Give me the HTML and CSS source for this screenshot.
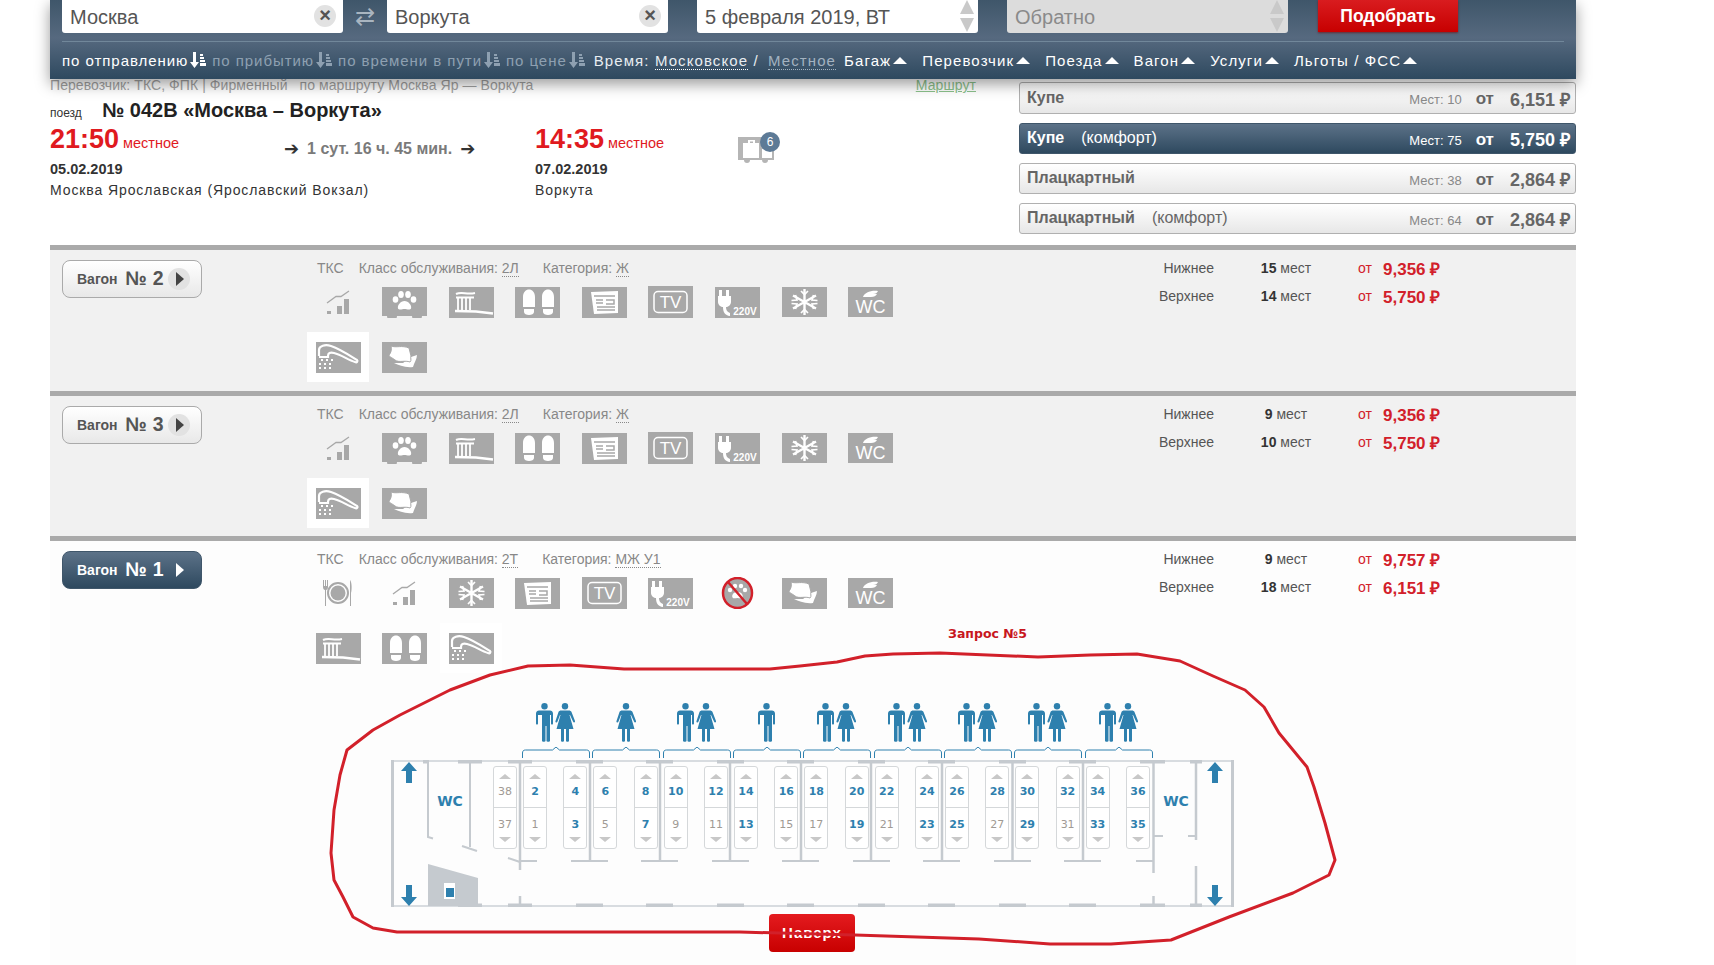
FILE: index.html
```html
<!DOCTYPE html>
<html lang="ru">
<head>
    <meta charset="UTF-8">
    <title>Москва – Воркута</title>
    <link rel="stylesheet" href="styles.css">
</head>
<body>

<!-- Icon set -->
<svg class="icon-defs" xmlns="http://www.w3.org/2000/svg">
    <symbol id="i-chart" viewBox="0 0 45 32">
        <path fill="#a8a8a8" d="M11 25h4v3h-4zM21 20h5v8h-5zM28 13h5v15h-5z"/>
        <path fill="none" stroke="#a8a8a8" stroke-width="1.300" d="M11 17l9-6.500h5l8-5.500"/>
    </symbol>
    <symbol id="i-paw" viewBox="0 0 45 32">
        <rect y="1" width="45" height="29" fill="#a8a8a8"/>
        <circle cx="10" cy="30" r="5" fill="#a8a8a8"/>
        <circle cx="35" cy="30" r="5" fill="#a8a8a8"/>
        <g fill="#fff">
            <path d="M22.500 15c4 0 7.500 4.500 6.500 7.500-1 2-4.500.5-6.500.5s-5.500 1.500-6.500-.5c-1-3 2.500-7.500 6.500-7.500z"/>
            <ellipse cx="13.500" cy="13.500" rx="2.800" ry="3.300"/>
            <ellipse cx="19" cy="8.500" rx="2.800" ry="3.500"/>
            <ellipse cx="26" cy="8.500" rx="2.800" ry="3.500"/>
            <ellipse cx="31.500" cy="13.500" rx="2.800" ry="3.300"/>
        </g>
    </symbol>
    <symbol id="i-brush" viewBox="0 0 45 32">
        <rect y="1" width="45" height="31" fill="#a8a8a8"/>
        <g fill="none" stroke="#fff">
            <path stroke-width="2" d="M7 8c6-3 10 1 19-1"/>
            <path stroke-width="1.800" d="M7 11.500h18M9 12v12M13 12v12M17 12v12M21 12v12"/>
            <path stroke-width="2.500" d="M6 25l21 .500 17 2"/>
        </g>
    </symbol>
    <symbol id="i-slippers" viewBox="0 0 45 32">
        <rect y="1" width="45" height="31" fill="#a8a8a8"/>
        <path fill="#fff" d="M8 11c0-10 12-10 12 0v10H8zM27 11c0-10 12-10 12 0v10H27zM9 23h10v3c0 4-10 4-10 0zM28 23h10v3c0 4-10 4-10 0z"/>
    </symbol>
    <symbol id="i-news" viewBox="0 0 45 32">
        <rect y="1" width="45" height="31" fill="#a8a8a8"/>
        <path fill="#fff" d="M9 6l27-1v22l-24 1z"/>
        <path fill="none" stroke="#a8a8a8" stroke-width="1.500" d="M12 10h21M14 14h7M14 17h7M24 14h8v4h-8M15 21h18M15 24h18"/>
    </symbol>
    <symbol id="i-tv" viewBox="0 0 45 32">
        <rect y="0" width="45" height="32" fill="#a8a8a8"/>
        <rect x="6" y="5.500" width="33" height="21" rx="4" fill="none" stroke="#fff" stroke-width="1.500"/>
        <text x="22.500" y="22" class="icon-text tv-text">TV</text>
    </symbol>
    <symbol id="i-plug" viewBox="0 0 45 32">
        <rect y="1" width="45" height="31" fill="#a8a8a8"/>
        <path fill="#fff" d="M4 4h3v6h4V4h3v6h2v6c0 3-3 5-5 5 0 3 1 5 4 6v3c-5-.5-7-4-7-9-2 0-5-2-5-5v-6h1z"/>
        <text x="30" y="29" class="icon-text plug-text">220V</text>
    </symbol>
    <symbol id="i-snow" viewBox="0 0 45 32">
        <rect y="1" width="45" height="30" fill="#a8a8a8"/>
        <g fill="none" stroke="#fff" stroke-width="2.400">
            <path d="M22.500 3v26M11 9.500l23 13M11 22.500l23-13"/>
            <path stroke-width="1.700" d="M19 5l3.500 3.500L26 5M19 27l3.500-3.500L26 27M9.500 14.500l5.500-.5-1.500-5M35.500 17.500l-5.500.5 1.500 5M9.500 17.500l5.500.5-1.500 5M35.500 14.500l-5.500-.5 1.500-5"/>
        </g>
    </symbol>
    <symbol id="i-wc" viewBox="0 0 45 32">
        <rect y="1" width="45" height="30" fill="#a8a8a8"/>
        <path fill="#fff" d="M15 11c1-4 8-7 15-6-1 2-2 3-5 3h4c-1 2-3 3-6 3z"/>
        <text x="22.500" y="27" class="icon-text wc-text">WC</text>
    </symbol>
    <symbol id="i-shower" viewBox="0 0 45 32">
        <rect y="1" width="45" height="31" fill="#a8a8a8"/>
        <path fill="none" stroke="#fff" stroke-width="2.200" d="M3 15V9c0-4 6-6 12-4 9 3 18 9 26 14 1 1 0 3-2 2-7-2-13-7-21-9-4-1-6 0-6 3v1H3"/>
        <path fill="none" stroke="#fff" stroke-width="2" stroke-dasharray="2 3" d="M5 19h14M3 23h15M3 27h13"/>
    </symbol>
    <symbol id="i-tissue" viewBox="0 0 45 32">
        <rect y="1" width="45" height="31" fill="#a8a8a8"/>
        <path fill="#fff" d="M12 22c5 2 11 5 19 4 1-4 4-8 4-12l-6 2-8 6z"/>
        <path fill="#fff" stroke="#a8a8a8" d="M9 5c5 2 11-1 18 2l2 8c-1 2 1 4-1 6-5-2-11 1-15-2-2-2-6-3-6-5 2-2 3-6 2-9z"/>
    </symbol>
    <symbol id="i-plate" viewBox="0 0 45 32">
        <g fill="#a8a8a8">
            <path d="M7 3h1v6h1V3h1v6h1V3h1v7c0 2-1 3-2 3v16H9V13c-1 0-2-1-2-3z"/>
            <path d="M34 3c2 2 2 10 1 13v13h-1z"/>
        </g>
        <circle cx="22" cy="16" r="10" fill="none" stroke="#a8a8a8" stroke-width="2"/>
        <circle cx="22" cy="16" r="7.500" fill="#a8a8a8"/>
    </symbol>
    <symbol id="i-nopet" viewBox="0 0 45 32">
        <ellipse cx="22.500" cy="16" rx="14.500" ry="15" fill="#a8a8a8" stroke="#d2202a" stroke-width="2.500"/>
        <g fill="#fff">
            <path d="M22.500 15c4 0 6 3 5 5.500-1 1.500-3 .5-5 .5s-4 1-5-.5c-1-2.500 1-5.500 5-5.500z"/>
            <circle cx="15" cy="13" r="2.200"/>
            <circle cx="20" cy="9" r="2.200"/>
            <circle cx="26" cy="9" r="2.200"/>
            <circle cx="30" cy="13" r="2.200"/>
        </g>
        <path stroke="#d2202a" stroke-width="2.500" d="M13 5l19 22"/>
    </symbol>
    <symbol id="i-man" viewBox="0 0 17 39">
        <circle cx="8.500" cy="3.200" r="3.200" fill="#2e80ae"/>
        <path fill="#2e80ae" d="M3 7.500h11c1.500 0 3 1 3 3v10c0 1.500-2 1.500-2 0V12h-1v26c0 1-3.500 1-3.500 0V23h-1v15c0 1-3.500 1-3.500 0V12H2v8.500c0 1.500-2 1.500-2 0v-10c0-2 1.500-3 3-3z"/>
    </symbol>
    <symbol id="i-woman" viewBox="0 0 20 39">
        <circle cx="10" cy="3.200" r="3.200" fill="#2e80ae"/>
        <path fill="#2e80ae" d="M6 7.500h8c1 0 2 .5 2.500 1.500l3.500 9c.5 1.500-1.500 2-2 .5L15 12l-.5 0 4 14H14v12c0 1-3 1-3 0V26H9v12c0 1-3 1-3 0V26H1.500l4-14-.5 0-2.500 6.500c-.5 1.500-2.500 1-2-.5L3.500 9C4 8 5 7.500 6 7.500z"/>
    </symbol>
    <symbol id="i-bracket" viewBox="0 0 68 11">
        <path fill="none" stroke="#2e80ae" d="M.5 11V6c0-2 1-3 3-3h27l3.500-3 3.500 3h27c2 0 3 1 3 3v5"/>
    </symbol>
    <symbol id="i-sort" viewBox="0 0 16 16">
        <path fill="currentColor" d="M3 0h3v10h3l-4.500 6L0 10h3zM10 2h3v2h-3zM10 5h4v2h-4zM10 8h5v2h-5zM10 11h6v3h-6z"/>
    </symbol>
</svg>

<div class="page">
    <!-- Search panel -->
    <header class="panel">
        <div class="search-row">
            <div class="field">Москва<span class="clear">×</span></div>
            <div class="swap">⇄</div>
            <div class="field">Воркута<span class="clear">×</span></div>
            <div class="field field-date">5 февраля 2019, ВТ<span class="spin"></span></div>
            <div class="field field-back">Обратно<span class="spin"></span></div>
            <button class="pick-btn">Подобрать</button>
        </div>
        <nav class="filter-row">
            <span class="sort sort-on">по отправлению<svg class="sort-icon"><use href="#i-sort"/></svg></span>
            <span class="sort">по прибытию<svg class="sort-icon"><use href="#i-sort"/></svg></span>
            <span class="sort">по времени в пути<svg class="sort-icon"><use href="#i-sort"/></svg></span>
            <span class="sort">по цене<svg class="sort-icon"><use href="#i-sort"/></svg></span>
            <span class="time-pick">Время: <u>Московское</u> / <u class="dim">Местное</u></span>
            <span class="drop">Багаж</span>
            <span class="drop">Перевозчик</span>
            <span class="drop">Поезда</span>
            <span class="drop">Вагон</span>
            <span class="drop">Услуги</span>
            <span class="drop">Льготы / ФСС</span>
        </nav>
    </header>

    <!-- Train summary -->
    <section class="trip">
        <div class="trip-info">
            <div class="carrier">
                <span>Перевозчик: ТКС, ФПК | Фирменный &nbsp; по маршруту Москва Яр — Воркута</span>
                <a class="route-link" href="#">Маршрут</a>
            </div>
            <div class="train-name"><small>поезд</small><strong>№ 042В «Москва – Воркута»</strong></div>
            <div class="times">
                <div class="stop">
                    <div class="clock">21:50<span>местное</span></div>
                    <div class="date">05.02.2019</div>
                    <div class="station">Москва Ярославская (Ярославский Вокзал)</div>
                </div>
                <div class="duration"><i>➔</i>1 сут. 16 ч. 45 мин.<i>➔</i></div>
                <div class="stop">
                    <div class="clock">14:35<span>местное</span></div>
                    <div class="date">07.02.2019</div>
                    <div class="station">Воркута</div>
                </div>
                <div class="baggage">
                    <svg width="36" height="28" viewBox="0 0 36 28">
                        <path fill="#b5b5b5" d="M0 0h36v23H30a3 3 0 0 1-6 0H12a3 3 0 0 1-6 0H0z"/>
                        <path fill="#fff" d="M5 6h5V3h7v3h4v15H5zM12 4.500v1.500h3V4.500zM24 12h10v9H24z"/>
                    </svg>
                    <span class="badge">6</span>
                </div>
            </div>
        </div>
        <div class="cabins">
            <div class="cabin"><b>Купе</b><span class="left">Мест: 10</span><b class="from">от</b><b class="price">6,151 ₽</b></div>
            <div class="cabin cabin-on"><b>Купе</b><em>(комфорт)</em><span class="left">Мест: 75</span><b class="from">от</b><b class="price">5,750 ₽</b></div>
            <div class="cabin"><b>Плацкартный</b><span class="left">Мест: 38</span><b class="from">от</b><b class="price">2,864 ₽</b></div>
            <div class="cabin"><b>Плацкартный</b><em>(комфорт)</em><span class="left">Мест: 64</span><b class="from">от</b><b class="price">2,864 ₽</b></div>
        </div>
    </section>

    <!-- Wagon 2 -->
    <section class="wagon wagon-first">
        <div class="wagon-top">
            <div class="wagon-side"><a class="wagon-btn">Вагон<b>№ 2</b><span class="go"></span></a></div>
            <div class="wagon-main">
                <div class="meta">ТКС<span>Класс обслуживания: <u>2Л</u></span><span>Категория: <u>Ж</u></span></div>
                <div class="services">
                    <div class="svc"><svg><use href="#i-chart"/></svg></div>
                    <div class="svc"><svg><use href="#i-paw"/></svg></div>
                    <div class="svc"><svg><use href="#i-brush"/></svg></div>
                    <div class="svc"><svg><use href="#i-slippers"/></svg></div>
                    <div class="svc"><svg><use href="#i-news"/></svg></div>
                    <div class="svc"><svg><use href="#i-tv"/></svg></div>
                    <div class="svc"><svg><use href="#i-plug"/></svg></div>
                    <div class="svc"><svg><use href="#i-snow"/></svg></div>
                    <div class="svc"><svg><use href="#i-wc"/></svg></div>
                    <div class="svc svc-on"><svg><use href="#i-shower"/></svg></div>
                    <div class="svc"><svg><use href="#i-tissue"/></svg></div>
                </div>
            </div>
            <div class="fares">
                <div class="fare"><span class="berth-name">Нижнее</span><span class="count"><b>15</b> мест</span><span class="fare-from">от</span><b class="fare-price">9,356 ₽</b></div>
                <div class="fare"><span class="berth-name">Верхнее</span><span class="count"><b>14</b> мест</span><span class="fare-from">от</span><b class="fare-price">5,750 ₽</b></div>
            </div>
        </div>
    </section>

    <!-- Wagon 3 -->
    <section class="wagon">
        <div class="wagon-top">
            <div class="wagon-side"><a class="wagon-btn">Вагон<b>№ 3</b><span class="go"></span></a></div>
            <div class="wagon-main">
                <div class="meta">ТКС<span>Класс обслуживания: <u>2Л</u></span><span>Категория: <u>Ж</u></span></div>
                <div class="services">
                    <div class="svc"><svg><use href="#i-chart"/></svg></div>
                    <div class="svc"><svg><use href="#i-paw"/></svg></div>
                    <div class="svc"><svg><use href="#i-brush"/></svg></div>
                    <div class="svc"><svg><use href="#i-slippers"/></svg></div>
                    <div class="svc"><svg><use href="#i-news"/></svg></div>
                    <div class="svc"><svg><use href="#i-tv"/></svg></div>
                    <div class="svc"><svg><use href="#i-plug"/></svg></div>
                    <div class="svc"><svg><use href="#i-snow"/></svg></div>
                    <div class="svc"><svg><use href="#i-wc"/></svg></div>
                    <div class="svc svc-on"><svg><use href="#i-shower"/></svg></div>
                    <div class="svc"><svg><use href="#i-tissue"/></svg></div>
                </div>
            </div>
            <div class="fares">
                <div class="fare"><span class="berth-name">Нижнее</span><span class="count"><b>9</b> мест</span><span class="fare-from">от</span><b class="fare-price">9,356 ₽</b></div>
                <div class="fare"><span class="berth-name">Верхнее</span><span class="count"><b>10</b> мест</span><span class="fare-from">от</span><b class="fare-price">5,750 ₽</b></div>
            </div>
        </div>
    </section>

    <!-- Wagon 1, opened -->
    <section class="wagon wagon-open">
        <div class="wagon-top">
            <div class="wagon-side"><a class="wagon-btn wagon-btn-on">Вагон<b>№ 1</b><span class="go"></span></a></div>
            <div class="wagon-main">
                <div class="meta">ТКС<span>Класс обслуживания: <u>2Т</u></span><span>Категория: <u>МЖ У1</u></span></div>
                <div class="services">
                    <div class="svc"><svg><use href="#i-plate"/></svg></div>
                    <div class="svc"><svg><use href="#i-chart"/></svg></div>
                    <div class="svc"><svg><use href="#i-snow"/></svg></div>
                    <div class="svc"><svg><use href="#i-news"/></svg></div>
                    <div class="svc"><svg><use href="#i-tv"/></svg></div>
                    <div class="svc"><svg><use href="#i-plug"/></svg></div>
                    <div class="svc"><svg><use href="#i-nopet"/></svg></div>
                    <div class="svc"><svg><use href="#i-tissue"/></svg></div>
                    <div class="svc"><svg><use href="#i-wc"/></svg></div>
                    <div class="svc"><svg><use href="#i-brush"/></svg></div>
                    <div class="svc"><svg><use href="#i-slippers"/></svg></div>
                    <div class="svc svc-on"><svg><use href="#i-shower"/></svg></div>
                </div>
            </div>
            <div class="fares">
                <div class="fare"><span class="berth-name">Нижнее</span><span class="count"><b>9</b> мест</span><span class="fare-from">от</span><b class="fare-price">9,757 ₽</b></div>
                <div class="fare"><span class="berth-name">Верхнее</span><span class="count"><b>18</b> мест</span><span class="fare-from">от</span><b class="fare-price">6,151 ₽</b></div>
            </div>
        </div>

        <!-- Compartment occupants -->
        <div class="people">
            <div class="group"><div class="figures"><svg class="man"><use href="#i-man"/></svg><svg class="woman"><use href="#i-woman"/></svg></div><svg class="bracket"><use href="#i-bracket"/></svg></div>
            <div class="group"><div class="figures"><svg class="woman"><use href="#i-woman"/></svg></div><svg class="bracket"><use href="#i-bracket"/></svg></div>
            <div class="group"><div class="figures"><svg class="man"><use href="#i-man"/></svg><svg class="woman"><use href="#i-woman"/></svg></div><svg class="bracket"><use href="#i-bracket"/></svg></div>
            <div class="group"><div class="figures"><svg class="man"><use href="#i-man"/></svg></div><svg class="bracket"><use href="#i-bracket"/></svg></div>
            <div class="group"><div class="figures"><svg class="man"><use href="#i-man"/></svg><svg class="woman"><use href="#i-woman"/></svg></div><svg class="bracket"><use href="#i-bracket"/></svg></div>
            <div class="group"><div class="figures"><svg class="man"><use href="#i-man"/></svg><svg class="woman"><use href="#i-woman"/></svg></div><svg class="bracket"><use href="#i-bracket"/></svg></div>
            <div class="group"><div class="figures"><svg class="man"><use href="#i-man"/></svg><svg class="woman"><use href="#i-woman"/></svg></div><svg class="bracket"><use href="#i-bracket"/></svg></div>
            <div class="group"><div class="figures"><svg class="man"><use href="#i-man"/></svg><svg class="woman"><use href="#i-woman"/></svg></div><svg class="bracket"><use href="#i-bracket"/></svg></div>
            <div class="group"><div class="figures"><svg class="man"><use href="#i-man"/></svg><svg class="woman"><use href="#i-woman"/></svg></div><svg class="bracket"><use href="#i-bracket"/></svg></div>
        </div>

        <!-- Wagon plan -->
        <div class="car">
            <svg class="car-walls" viewBox="391 760 843 147" xmlns="http://www.w3.org/2000/svg">
                <rect x="392.500" y="761" width="840" height="145" fill="none" stroke="#d8dce0" stroke-width="2"/>
                <path fill="none" stroke="#c5cacf" stroke-width="3" d="M392.500 760v147M1232.500 760v147"/>
                <path fill="none" stroke="#c5cacf" stroke-width="4" d="M458 761.500h24M508 761.500h24M576 761.500h27M646 761.500h27M717 761.500h27M787 761.500h27M858 761.500h27M928 761.500h27M999 761.500h27M1069 761.500h27M1140 761.500h25M1190 761.500h12M423 761.500h6M458 905.500h24M508 905.500h24M576 905.500h27M646 905.500h27M717 905.500h27M787 905.500h27M858 905.500h27M928 905.500h27M999 905.500h27M1069 905.500h27M1140 905.500h25M1190 905.500h12"/>
                <rect x="388" y="809" width="3" height="50" fill="#c5cacf"/>
                <rect x="1234" y="809" width="4" height="50" fill="#c5cacf"/>
                <path fill="none" stroke="#c5cacf" stroke-width="2" d="M428 763v74l5 1.500M470 763v84M462 846l15 5M508 858l12 4"/>
                <path fill="none" stroke="#c5cacf" stroke-width="2.500" d="M520 760v110M520 896v11M590 760v102M660 760v102M730 760v102M801 760v102M871 760v102M942 760v102M1012.500 760v102M1083 760v102M1153.500 760v113M1153.500 896v11M1196 763v77M1196 866v41"/>
                <path fill="none" stroke="#c5cacf" stroke-width="2" d="M520 861h17M571 861h37M641 861h37M712 861h37M782 861h37M853 861h37M923 861h37M994 861h37M1064 861h37M1136 861h18M1153 836h10M1188 836h8"/>
                <path fill="#c5cacf" d="M428 864l50 14v28h-50z"/>
                <rect x="444" y="883" width="11" height="16" fill="#fff"/>
                <rect x="446" y="888" width="8" height="9" fill="#2e80ae"/>
                <g fill="#2e80ae">
                    <path d="M409 762l8 9h-5v12h-6v-12h-5zM409 906l8-9h-5v-12h-6v12h-5zM1215 762l8 9h-5v12h-6v-12h-5zM1215 906l8-9h-5v-12h-6v12h-5z"/>
                </g>
                <text x="450" y="806" class="car-wc">WC</text>
                <text x="1176" y="806" class="car-wc">WC</text>
            </svg>
            <div class="seats">
                <div class="seat-half">
                    <div class="seat"><div class="berth upper busy">38</div><div class="berth lower busy">37</div></div>
                </div>
                <div class="compartment">
                    <div class="seat"><div class="berth upper">2</div><div class="berth lower busy">1</div></div>
                    <div class="seat"><div class="berth upper">4</div><div class="berth lower">3</div></div>
                </div>
                <div class="compartment">
                    <div class="seat"><div class="berth upper">6</div><div class="berth lower busy">5</div></div>
                    <div class="seat"><div class="berth upper">8</div><div class="berth lower">7</div></div>
                </div>
                <div class="compartment">
                    <div class="seat"><div class="berth upper">10</div><div class="berth lower busy">9</div></div>
                    <div class="seat"><div class="berth upper">12</div><div class="berth lower busy">11</div></div>
                </div>
                <div class="compartment">
                    <div class="seat"><div class="berth upper">14</div><div class="berth lower">13</div></div>
                    <div class="seat"><div class="berth upper">16</div><div class="berth lower busy">15</div></div>
                </div>
                <div class="compartment">
                    <div class="seat"><div class="berth upper">18</div><div class="berth lower busy">17</div></div>
                    <div class="seat"><div class="berth upper">20</div><div class="berth lower">19</div></div>
                </div>
                <div class="compartment">
                    <div class="seat"><div class="berth upper">22</div><div class="berth lower busy">21</div></div>
                    <div class="seat"><div class="berth upper">24</div><div class="berth lower">23</div></div>
                </div>
                <div class="compartment">
                    <div class="seat"><div class="berth upper">26</div><div class="berth lower">25</div></div>
                    <div class="seat"><div class="berth upper">28</div><div class="berth lower busy">27</div></div>
                </div>
                <div class="compartment">
                    <div class="seat"><div class="berth upper">30</div><div class="berth lower">29</div></div>
                    <div class="seat"><div class="berth upper">32</div><div class="berth lower busy">31</div></div>
                </div>
                <div class="compartment">
                    <div class="seat"><div class="berth upper">34</div><div class="berth lower">33</div></div>
                    <div class="seat"><div class="berth upper">36</div><div class="berth lower">35</div></div>
                </div>
            </div>
        </div>
    </section>
</div>

<!-- Floating button and the hand-drawn note on top of the page -->
<a class="to-top" href="#">Наверх</a>
<div class="note-title">Запрос №5</div>
<svg class="note" viewBox="0 0 1714 965" xmlns="http://www.w3.org/2000/svg">
    <path fill="none" stroke="#d2202a" stroke-width="3" stroke-linejoin="round" d="M347 750L373 730 400 715 450 690 490 675 528 666 570 665 624 669 700 669 770 669 800 666 837 662 865 656 893 654 940 653 1038 657 1090 655 1137 654 1180 661 1213 676 1245 690 1264 707 1279 733 1307 767 1314 787 1325 823 1335 860 1329 875 1293 893 1229 917 1171 940 1111 944 1050 944 979 939 855 935 740 932 613 932 397 932 373 928 353 917 343 897 334 880 331 853 334 810 340 775z"/>
</svg>

</body>
</html>
```

FILE: styles.css
```css
* {
    box-sizing: border-box;
}

html, body {
    height: 965px;
    overflow: hidden;
}

body {
    margin: 0;
    position: relative;
    background: #fff;
    color: #333;
    font-family: "Liberation Sans", Arial, sans-serif;
    font-size: 14px;
}

.icon-defs {
    display: none;
}

.page {
    width: 1526px;
    margin-left: 50px;
}

/* Search panel */
.panel {
    position: relative;
    z-index: 2;
    height: 79px;
    padding: 0 12px;
    background: linear-gradient(#3f566a, #56697f 48%, #2e495f);
    box-shadow: 0 5px 14px rgba(0, 0, 0, 0.4);
}

.search-row {
    display: flex;
    height: 42px;
    border-bottom: 1px solid #71879a;
}

.field {
    position: relative;
    width: 281px;
    height: 33px;
    padding: 2px 8px;
    background: #fff;
    border-radius: 0 0 3px 3px;
    color: #555;
    font-size: 20px;
    line-height: 30px;
}

.swap {
    width: 44px;
    color: #a9b5c0;
    font-size: 24px;
    line-height: 34px;
    text-align: center;
}

.field-date {
    margin-left: 29px;
}

.field-back {
    margin-left: 29px;
    background: #dcdcdc;
    color: #8a8a8a;
}

.clear {
    position: absolute;
    right: 7px;
    top: 5px;
    width: 22px;
    height: 22px;
    border-radius: 50%;
    background: #e2e2e2;
    color: #555;
    font-size: 20px;
    font-weight: bold;
    line-height: 21px;
    text-align: center;
}

.spin::before, .spin::after {
    content: "";
    position: absolute;
    right: 4px;
    border-left: 7px solid transparent;
    border-right: 7px solid transparent;
}

.spin::before {
    top: 0;
    border-bottom: 14px solid #c9c9c9;
}

.spin::after {
    top: 18px;
    border-top: 14px solid #c9c9c9;
}

.pick-btn {
    width: 140px;
    height: 32px;
    margin-left: 30px;
    border: none;
    background: linear-gradient(#d91c1f, #c70000);
    box-shadow: 0 1px 2px rgba(120, 0, 0, 0.6);
    color: #fff;
    font-family: inherit;
    font-size: 17.500px;
    font-weight: bold;
}

.filter-row {
    display: flex;
    align-items: center;
    height: 36px;
    color: #fff;
    font-size: 15px;
    letter-spacing: 1.100px;
    white-space: nowrap;
}

.sort {
    display: flex;
    align-items: center;
    margin-right: 6px;
    color: #8ea0b1;
    letter-spacing: 0.950px;
}

.sort-on {
    color: #fff;
}

.sort-icon {
    width: 16px;
    height: 16px;
    margin-left: 2px;
}

.time-pick {
    margin-left: 3px;
    margin-right: 8px;
    color: #e8edf1;
}

.time-pick u {
    text-decoration: none;
    border-bottom: 1px dotted #fff;
}

.time-pick .dim {
    margin-left: 4px;
    color: #a3b2c0;
    border-color: #a3b2c0;
}

.drop {
    margin-right: 15px;
}

.drop::after {
    content: "";
    display: inline-block;
    margin-left: 2px;
    vertical-align: 2px;
    border-left: 7px solid transparent;
    border-right: 7px solid transparent;
    border-bottom: 7px solid #fff;
}

/* Train summary */
.trip {
    display: flex;
    height: 166px;
}

.trip-info {
    width: 969px;
}

.carrier {
    display: flex;
    justify-content: space-between;
    width: 926px;
    height: 13px;
    color: #a2a2a2;
    font-size: 14px;
    letter-spacing: 0.080px;
    line-height: 13px;
}

.route-link {
    color: #8cc28c;
    font-size: 14px;
}

.train-name {
    display: flex;
    align-items: baseline;
    margin-top: 7px;
}

.train-name small {
    width: 52px;
    font-size: 12px;
}

.train-name strong {
    color: #222;
    font-size: 20px;
}

.times {
    display: flex;
    margin-top: 2px;
}

.stop {
    width: 0;
    min-width: 170px;
    white-space: nowrap;
}

.clock {
    color: #e01a1f;
    font-size: 27px;
    font-weight: bold;
    line-height: 30px;
}

.clock span {
    margin-left: 4px;
    font-size: 14.500px;
    font-weight: normal;
}

.date {
    margin-top: 3px;
    font-size: 14.500px;
    font-weight: bold;
    line-height: 16px;
}

.station {
    margin-top: 5px;
    font-size: 14px;
    letter-spacing: 0.900px;
    line-height: 16px;
}

.duration {
    display: flex;
    align-items: center;
    align-self: flex-start;
    width: 315px;
    margin-top: 14px;
    padding-left: 64px;
    color: #7a7a7a;
    font-size: 16px;
    font-weight: bold;
    white-space: nowrap;
}

.duration i {
    color: #333;
    font-family: "DejaVu Sans", sans-serif;
    font-size: 18px;
    font-style: normal;
}

.duration i:first-child {
    margin-right: 8px;
}

.duration i:last-child {
    margin-left: 8px;
}

.baggage {
    position: relative;
    margin-left: 33px;
    margin-top: 13px;
    height: 28px;
}

.badge {
    position: absolute;
    right: -6px;
    top: -5px;
    width: 20px;
    height: 20px;
    border-radius: 50%;
    background: #5d7a96;
    color: #fff;
    font-size: 12px;
    line-height: 20px;
    text-align: center;
}

.cabins {
    display: flex;
    flex-direction: column;
    gap: 9px;
    width: 557px;
    padding-top: 3px;
}

.cabin {
    display: flex;
    align-items: center;
    height: 31px;
    padding: 0 5px 0 7px;
    background: linear-gradient(#fff, #e7e7e7);
    border: 1px solid #b0b0b0;
    border-radius: 3px;
    color: #666;
    font-size: 16px;
}

.cabin:first-child {
    height: 32px;
}

.cabin > b:first-child {
    margin-bottom: 1px;
}

.cabin em {
    margin-left: 17px;
    margin-bottom: 1px;
    font-style: normal;
}

.cabin .left {
    margin-left: auto;
    margin-top: 3px;
    font-size: 13px;
    color: #888;
}

.from {
    margin-left: 14px;
    margin-top: 2px;
    font-size: 17px;
}

.price {
    margin-left: 16px;
    margin-top: 1px;
    font-size: 18px;
}

.cabin-on {
    background: linear-gradient(#5c7288, #2e495f);
    border-color: #3f566a;
    color: #fff;
}

.cabin-on .left {
    color: #fff;
}

/* Wagons */
.wagon {
    height: 145px;
    border-top: 5px solid #aaa;
    background: #f1f1f1;
}

.wagon-first {
    height: 146px;
}

.wagon-open {
    height: 429px;
    background: #fdfdfd;
}

.wagon-top {
    display: flex;
}

.wagon-side {
    width: 257px;
    padding: 10px 0 0 12px;
}

.wagon-btn {
    display: flex;
    align-items: center;
    width: 140px;
    height: 38px;
    padding-left: 14px;
    background: linear-gradient(#fff, #e8e8e8);
    border: 1px solid #aaa;
    border-radius: 8px;
    color: #555;
    font-size: 14px;
    font-weight: bold;
    white-space: pre;
}

.wagon-btn b {
    margin-left: 8px;
    margin-top: -2px;
    font-size: 19.500px;
}

.go {
    display: flex;
    align-items: center;
    justify-content: center;
    width: 22px;
    height: 22px;
    margin-left: 4px;
    border-radius: 50%;
    background: #e2e2e2;
}

.go::after {
    content: "";
    margin-left: 3px;
    border-top: 7px solid transparent;
    border-bottom: 7px solid transparent;
    border-left: 8px solid #444;
}

.wagon-btn-on {
    background: linear-gradient(#5c7288, #2e495f);
    border-color: #3f566a;
    color: #fff;
}

.wagon-btn-on .go {
    background: none;
}

.wagon-btn-on .go::after {
    border-left-color: #fff;
}

.wagon-main {
    width: 600px;
}

.meta {
    height: 27px;
    padding-left: 10px;
    color: #888;
    font-size: 14px;
    line-height: 36px;
}

.meta span {
    margin-left: 15px;
}

.meta span + span {
    margin-left: 24px;
}

.meta u {
    text-decoration: none;
    border-bottom: 1px dotted #888;
}

.services {
    display: grid;
    grid-template-columns: repeat(9, 62px);
    grid-auto-rows: 50px;
    column-gap: 4.600px;
    row-gap: 5px;
    width: 600px;
}

.svc {
    display: flex;
    align-items: center;
    justify-content: center;
}

.svc svg {
    width: 45px;
    height: 32px;
}

.svc-on {
    background: #fff;
}

.icon-text {
    fill: #fff;
    font-family: "Liberation Sans", Arial, sans-serif;
    text-anchor: middle;
}

.tv-text {
    font-size: 17px;
}

.plug-text {
    font-size: 10px;
    font-weight: bold;
}

.wc-text {
    font-size: 18px;
}

.fares {
    margin-left: 250px;
    padding-top: 4px;
}

.fare {
    display: flex;
    align-items: center;
    height: 28px;
    font-size: 14px;
}

.berth-name {
    width: 57px;
    color: #555;
    text-align: right;
}

.count {
    width: 144px;
    color: #555;
    text-align: center;
    white-space: nowrap;
}

.count b {
    color: #333;
}

.fare-from {
    width: 25px;
    color: #d2202a;
}

.fare-price {
    color: #d2202a;
    font-size: 17px;
}

/* Wagon plan */
.people {
    display: flex;
    margin: 30px 0 0 471px;
}

.group {
    width: 70.330px;
}

.figures {
    display: flex;
    justify-content: center;
    gap: 2px;
    height: 44px;
    margin-left: -1px;
}

.man {
    width: 17px;
    height: 39px;
}

.woman {
    width: 20px;
    height: 39px;
}

.bracket {
    display: block;
    width: 68px;
    height: 11px;
    margin-left: 1px;
}

.car {
    position: relative;
    width: 843px;
    height: 147px;
    margin: 2px 0 0 341px;
}

.car-walls {
    position: absolute;
    left: 0;
    top: 0;
    width: 843px;
    height: 147px;
}

.car-wc {
    fill: #2e80ae;
    font-family: "DejaVu Sans", sans-serif;
    font-size: 14px;
    font-weight: bold;
    text-anchor: middle;
}

.seats {
    position: relative;
    display: flex;
    padding: 6px 0 0 102px;
}

.seat-half {
    width: 27px;
}

.compartment {
    display: flex;
    justify-content: space-between;
    width: 70.330px;
    padding: 0 3px;
}

.seat {
    width: 24px;
    height: 83px;
    background: #fff;
    border: 1px solid #d5d8da;
    border-radius: 3px;
}

.berth {
    position: relative;
    height: 41px;
    color: #2e80ae;
    font-family: "DejaVu Sans", sans-serif;
    font-size: 11px;
    font-weight: bold;
    text-align: center;
}

.berth::before {
    content: "";
    position: absolute;
    left: 5px;
    border-left: 6px solid transparent;
    border-right: 6px solid transparent;
}

.upper {
    padding-top: 18px;
    border-bottom: 1px solid #d5d8da;
}

.upper::before {
    top: 7px;
    border-bottom: 5px solid #c8c8c8;
}

.lower {
    padding-top: 10px;
}

.lower::before {
    bottom: 7px;
    border-top: 5px solid #c8c8c8;
}

.busy {
    color: #a09a94;
    font-weight: normal;
}

/* Overlays */
.to-top {
    position: absolute;
    left: 769px;
    top: 914px;
    z-index: 3;
    width: 86px;
    height: 38px;
    background: linear-gradient(#e41b1f, #c80000);
    border-radius: 4px;
    color: #fff;
    font-size: 15px;
    font-weight: bold;
    letter-spacing: 1px;
    line-height: 38px;
    text-align: center;
    text-decoration: none;
}

.note-title {
    position: absolute;
    left: 948px;
    top: 626px;
    z-index: 4;
    color: #c8161d;
    font-family: "DejaVu Sans", sans-serif;
    font-size: 12.500px;
    font-weight: bold;
}

.note {
    position: absolute;
    left: 0;
    top: 0;
    z-index: 4;
    width: 1714px;
    height: 965px;
    pointer-events: none;
}
```
